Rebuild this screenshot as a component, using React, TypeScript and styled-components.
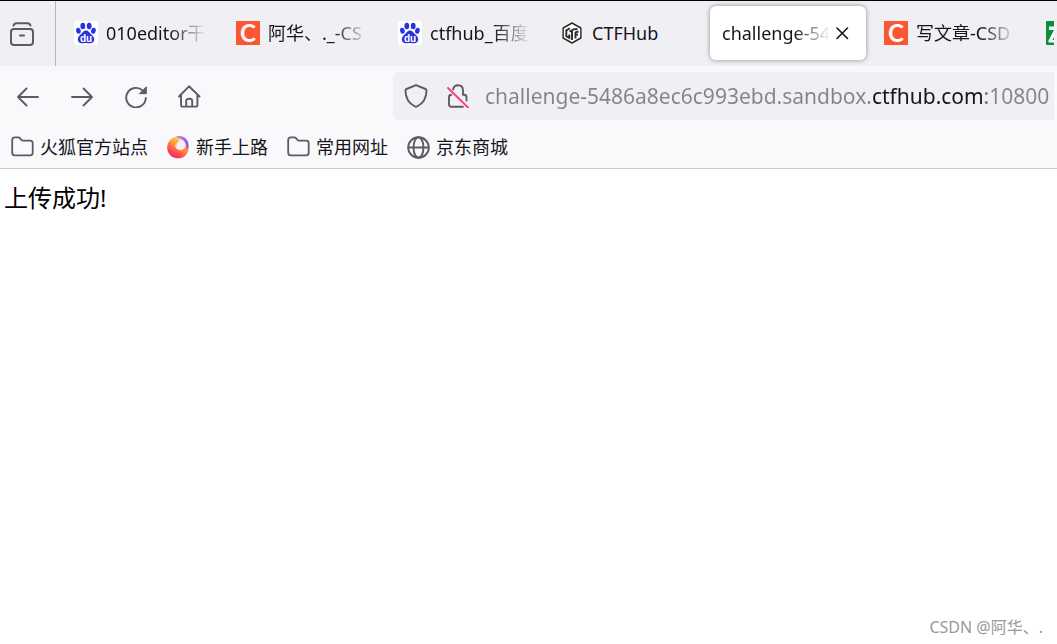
import React from 'react';
import styled, { createGlobalStyle, css } from 'styled-components';

const GlobalStyle = createGlobalStyle`
  *, *::before, *::after { box-sizing: border-box; }
  body {
    margin: 0;
    background: #ffffff;
    color: #15141a;
    font-family: "Noto Sans", "Noto Sans CJK SC", sans-serif;
  }
  button, input { font: inherit; color: inherit; }
`;

const Browser = styled.div`
  display: flex;
  flex-direction: column;
  min-height: 100vh;
  overflow: hidden;
`;

const TabStrip = styled.header`
  display: flex;
  height: 66px;
  padding-right: 3px;
  border-top: 1px solid #000000;
  background: #f0eff4;
`;

const PlainButton = styled.button`
  display: flex;
  align-items: center;
  justify-content: center;
  flex: none;
  padding: 0;
  border: 0;
  background: none;
  cursor: pointer;
`;

const TabHistoryButton = styled(PlainButton)`
  width: 56px;
  padding-right: 12px;
  border-right: 1px solid #b6b5bb;
`;

const TabList = styled.nav`
  display: flex;
  flex: 1;
  min-width: 0;
  gap: 6px;
  padding: 5px 0 6px 6px;
  overflow: hidden;
`;

const Tab = styled.div<{ $active?: boolean }>`
  display: flex;
  align-items: center;
  flex: none;
  width: 156px;
  padding: 0 12px;
  border-radius: 6px;
  ${({ $active }) =>
    $active &&
    css`
      background: #ffffff;
      box-shadow: 0 0 5px rgba(0, 0, 0, 0.42);
    `}
`;

const TabButton = styled(PlainButton)`
  flex: 1;
  min-width: 0;
  justify-content: flex-start;
  gap: 8px;
`;

const TabLabel = styled.span<{ $fade: boolean }>`
  flex: 1;
  min-width: 0;
  overflow: hidden;
  white-space: nowrap;
  text-align: left;
  font-size: 18px;
  line-height: 28px;
  ${({ $fade }) =>
    $fade &&
    css`
      mask-image: linear-gradient(to left, transparent, #000 36px);
    `}
`;

const CloseButton = styled(PlainButton)`
  width: 24px;
  height: 24px;
`;

const Toolbar = styled.div`
  display: flex;
  align-items: center;
  height: 60px;
  padding: 0 3px 0 0;
  background: #f9f9fb;
`;

const NavButtons = styled.div`
  display: flex;
  flex: none;
  width: 393px;
  padding-left: 1px;
`;

const NavButton = styled(PlainButton)`
  width: 54px;
  height: 48px;
`;

const AddressBar = styled.div`
  display: flex;
  align-items: center;
  flex: 1;
  min-width: 0;
  height: 48px;
  padding-left: 11px;
  border-radius: 6px 0 0 6px;
  background: #f0eff4;
`;

const SiteButton = styled(PlainButton)`
  width: 24px;
  height: 32px;
  margin-right: 18px;
`;

/* The registered domain is darker than the rest of the address. */
const AddressInput = styled.input`
  flex: 1;
  min-width: 0;
  height: 36px;
  padding: 0;
  margin-left: -3px;
  border: 0;
  outline: 0;
  font-size: 21px;
  color: #15141a;
  background: linear-gradient(to right, #85848a 387px, #15141a 387px, #15141a 501px, #85848a 501px);
  background-clip: text;
  -webkit-background-clip: text;
  -webkit-text-fill-color: transparent;
`;

const BookmarkBar = styled.nav`
  display: flex;
  align-items: center;
  gap: 18px;
  height: 43px;
  padding-left: 10px;
  border-bottom: 1px solid #cccccc;
  background: #f9f9fb;
`;

const Bookmark = styled.a`
  display: flex;
  align-items: center;
  gap: 6px;
  font-size: 18px;
  line-height: 26px;
  color: #15141a;
  text-decoration: none;
  white-space: nowrap;
`;

const Page = styled.main`
  display: flex;
  flex: 1;
  flex-direction: column;
  justify-content: space-between;
  padding: 12px 14px 5px 4px;
  background: #ffffff;
`;

const Message = styled.p`
  margin: 0;
  font-size: 24px;
  line-height: 34px;
  color: #000000;
`;

const Watermark = styled.small`
  align-self: flex-end;
  font-size: 16px;
  line-height: 24px;
  color: #999999;
`;

const Icon = styled.svg`
  display: block;
  flex: none;
  fill: none;
  stroke: #5b5b66;
  stroke-width: 2;
  stroke-linecap: round;
  stroke-linejoin: round;
`;

const icon = (size: number, children: React.ReactNode) => (
  <Icon width={size} height={size} viewBox={`0 0 ${size} ${size}`} aria-hidden="true">
    {children}
  </Icon>
);

const BaiduIcon = () =>
  icon(
    24,
    <g stroke="none">
      <rect width="24" height="24" rx="3" fill="#fff" />
      <g fill="#2932e1">
        <ellipse cx="8.8" cy="5" rx="2.4" ry="3.2" />
        <ellipse cx="15.2" cy="5" rx="2.4" ry="3.2" />
        <ellipse cx="4.4" cy="9.7" rx="2.3" ry="3" transform="rotate(-12 4.4 9.7)" />
        <ellipse cx="19.4" cy="9.7" rx="2.3" ry="3" transform="rotate(12 19.4 9.7)" />
        <path d="M12 9.6c2.4 0 3.3 2 4.8 3.4 1.7 1.5 3.4 2.9 3.4 5.3 0 2.500-1.700 3.900-3.900 3.900-1.500 0-2.700-.3-4.300-.3s-2.800.3-4.300.3c-2.200 0-3.900-1.400-3.900-3.900 0-2.400 1.700-3.800 3.400-5.300C8.700 11.600 9.600 9.600 12 9.600z" />
      </g>
      <text x="12" y="20.500" textAnchor="middle" fontFamily="Liberation Sans" fontWeight="700" fontSize="10" fill="#fff">
        du
      </text>
    </g>
  );

const CsdnIcon = () =>
  icon(
    24,
    <g stroke="none">
      <rect width="24" height="24" fill="#fc5531" />
      <text x="12" y="20.500" textAnchor="middle" fontFamily="Lato" fontWeight="700" fontSize="24" fill="#fff">
        C
      </text>
    </g>
  );

const CtfHubIcon = () =>
  icon(
    24,
    <g stroke="#2b2b2b">
      <path d="M12 1.500 21.300 6.700v10.600L12 22.500 2.700 17.300V6.700z" fill="#fff" stroke="#fff" strokeWidth="2" />
      <path d="M12 2 20.900 7v10L12 22 3.100 17V7z" strokeWidth="1.500" />
      <path d="M10 7.200 6.300 9.400v5.800l3 1.600v-3.300M9.500 10.800 13.500 8.400 17.500 8M12 9.500v9.500M15.500 17.500v-6l3-1.200M15.500 14.200l2.600-.8" strokeWidth="1.900" strokeLinecap="butt" strokeLinejoin="miter" />
    </g>
  );

const GreenIcon = () =>
  icon(
    24,
    <g stroke="none">
      <rect width="24" height="24" rx="1" fill="#0a8f3c" />
      <path d="M3 5.500h9v3L6.500 19H12v2.500H2.500v-2L8 9H3z" fill="#fff" />
    </g>
  );

const HistoryIcon = () =>
  icon(
    26,
    <>
      <path d="M4.500 4.500c.5-1.600 1.300-2.300 3-2.300h11c1.700 0 2.500.7 3 2.300" />
      <rect x="2" y="8" width="22" height="16" rx="3" />
      <path d="M11 14.500h4" />
    </>
  );

const BackIcon = () => icon(24, <path d="M22 13H2M10.500 4.500 2 13l8.500 8.500" strokeWidth="1.900" />);
const ForwardIcon = () => icon(24, <path d="M2 13h20M13.500 4.500 22 13l-8.500 8.500" strokeWidth="1.900" />);
const ReloadIcon = () =>
  icon(
    24,
    <>
      <path d="M21.800 14a9.800 9.800 0 1 1-3.200-7.600" strokeWidth="1.900" />
      <path d="M22.300 3.200v6.500h-6.500z" fill="#5b5b66" strokeWidth="1" />
    </>
  );
const HomeIcon = () =>
  icon(
    24,
    <path d="M1 12.500 11 2.300 21.500 12.500M3 11v10c0 1 .6 1.600 1.600 1.600h13.200c1 0 1.600-.6 1.600-1.600V11M8.200 22.500V17c0-1.500 1-2.300 3-2.300s3 .8 3 2.300v5.500" strokeWidth="1.900" />
  );
const ShieldIcon = () =>
  icon(
    24,
    <path d="M12 1.200 21.500 5c.8.300 1 .8 1 1.500 0 7-3.500 13-9.500 16-.7.300-1.300.3-2 0-6-3-9.500-9-9.500-16 0-.7.200-1.200 1-1.500z" strokeWidth="1.900" />
  );
const InsecureIcon = () =>
  icon(
    24,
    <>
      <path d="M7 5.500C7.700 2.700 9.300 1.300 12 1.300c3.200 0 5 2 5 5.200v4.200h1c1.700 0 2.500.8 2.500 2.500v3.300M5.500 10.700c-1.700 0-2.500.8-2.500 2.500v7c0 1.700.8 2.500 2.500 2.500H17" strokeWidth="1.900" />
      <path d="m2 5 19 19" stroke="#f0eff4" strokeWidth="2" strokeLinecap="butt" />
      <path d="m2 4 20 19.500" stroke="#ff3b6b" strokeWidth="1.800" />
    </>
  );
const CloseIcon = () => icon(14, <path d="m2 2 10.500 10.500M12.500 2 2 12.500" stroke="#15141a" strokeWidth="1.600" />);
const FolderIcon = () =>
  icon(
    24,
    <path d="M2.200 5c0-1.700.9-2.600 2.600-2.600H8c1 0 1.600.3 2.200 1l1.300 1.600c.4.500.8.700 1.500.7h7.200c1.600 0 2.500.9 2.500 2.500v9.600c0 1.700-.9 2.600-2.600 2.600H4.800c-1.700 0-2.600-.9-2.600-2.600z" strokeWidth="1.800" />
  );
const GlobeIcon = () =>
  icon(
    24,
    <>
      <circle cx="12.500" cy="12.500" r="10.300" strokeWidth="1.900" />
      <ellipse cx="12.500" cy="12.500" rx="5" ry="10.300" strokeWidth="1.900" />
      <path d="M2.500 12.500h20" strokeWidth="1.900" />
    </>
  );
const FirefoxIcon = () =>
  icon(
    24,
    <>
      <defs>
        <linearGradient id="flame" x1="0.8" y1="0.1" x2="0.3" y2="1">
          <stop offset="0" stopColor="#ffe14a" />
          <stop offset=".4" stopColor="#ff9a3c" />
          <stop offset=".75" stopColor="#ff4a50" />
          <stop offset="1" stopColor="#f5256c" />
        </linearGradient>
        <linearGradient id="tail" x1="0" y1="0" x2="1" y2="1">
          <stop offset="0" stopColor="#c07bff" />
          <stop offset="1" stopColor="#7a4cf0" />
        </linearGradient>
      </defs>
      <g stroke="none">
        <circle cx="12" cy="12.500" r="10.800" fill="url(#flame)" />
        <circle cx="14.200" cy="9.800" r="5.200" fill="#f4eefc" />
        <path d="M7.500 2.200C9 5 12 5.200 13.500 6c-2.500 1-3.500 3.200-2.600 5.800C9.500 11 8.800 9.500 9 7.500 7 6.500 6.500 4.500 7.500 2.200z" fill="#ffb03a" />
        <path d="M9.500 1.700C17-.8 22.800 4.500 22.500 10.500c0 2-.8 3.800-2.300 4.500C22 8 17.500 3.500 9.500 1.700z" fill="url(#tail)" />
      </g>
    </>
  );

type TabItem = { label: string; icon?: React.ReactNode; active?: boolean; fade?: boolean };

const tabs: TabItem[] = [
  { label: '010editor干', icon: <BaiduIcon />, fade: true },
  { label: '阿华、._-CS', icon: <CsdnIcon />, fade: true },
  { label: 'ctfhub_百度', icon: <BaiduIcon />, fade: true },
  { label: 'CTFHub', icon: <CtfHubIcon /> },
  { label: 'challenge-54', active: true, fade: true },
  { label: '写文章-CSD', icon: <CsdnIcon />, fade: true },
  { label: '', icon: <GreenIcon /> },
];

const bookmarks = [
  { label: '火狐官方站点', icon: <FolderIcon /> },
  { label: '新手上路', icon: <FirefoxIcon /> },
  { label: '常用网址', icon: <FolderIcon /> },
  { label: '京东商城', icon: <GlobeIcon /> },
];

export default function App() {
  return (
    <Browser>
      <GlobalStyle />
      <TabStrip>
        <TabHistoryButton aria-label="Recent tabs">
          <HistoryIcon />
        </TabHistoryButton>
        <TabList aria-label="Tabs">
          {tabs.map((tab, i) => (
            <Tab key={i} $active={tab.active}>
              <TabButton aria-label={tab.label || 'Tab'} aria-current={tab.active ? 'page' : undefined}>
                {tab.icon}
                {tab.label && <TabLabel $fade={!!tab.fade}>{tab.label}</TabLabel>}
              </TabButton>
              {tab.active && (
                <CloseButton aria-label="Close tab">
                  <CloseIcon />
                </CloseButton>
              )}
            </Tab>
          ))}
        </TabList>
      </TabStrip>
      <Toolbar>
        <NavButtons>
          <NavButton aria-label="Back"><BackIcon /></NavButton>
          <NavButton aria-label="Forward"><ForwardIcon /></NavButton>
          <NavButton aria-label="Reload"><ReloadIcon /></NavButton>
          <NavButton aria-label="Home"><HomeIcon /></NavButton>
        </NavButtons>
        <AddressBar>
          <SiteButton aria-label="Tracking protection"><ShieldIcon /></SiteButton>
          <SiteButton aria-label="Connection not secure"><InsecureIcon /></SiteButton>
          <AddressInput
            aria-label="Address"
            spellCheck={false}
            defaultValue="challenge-5486a8ec6c993ebd.sandbox.ctfhub.com:10800"
          />
        </AddressBar>
      </Toolbar>
      <BookmarkBar aria-label="Bookmarks">
        {bookmarks.map((b) => (
          <Bookmark key={b.label} href="#">
            {b.icon}
            {b.label}
          </Bookmark>
        ))}
      </BookmarkBar>
      <Page>
        <Message>上传成功!</Message>
        <Watermark>CSDN @阿华、.</Watermark>
      </Page>
    </Browser>
  );
}
